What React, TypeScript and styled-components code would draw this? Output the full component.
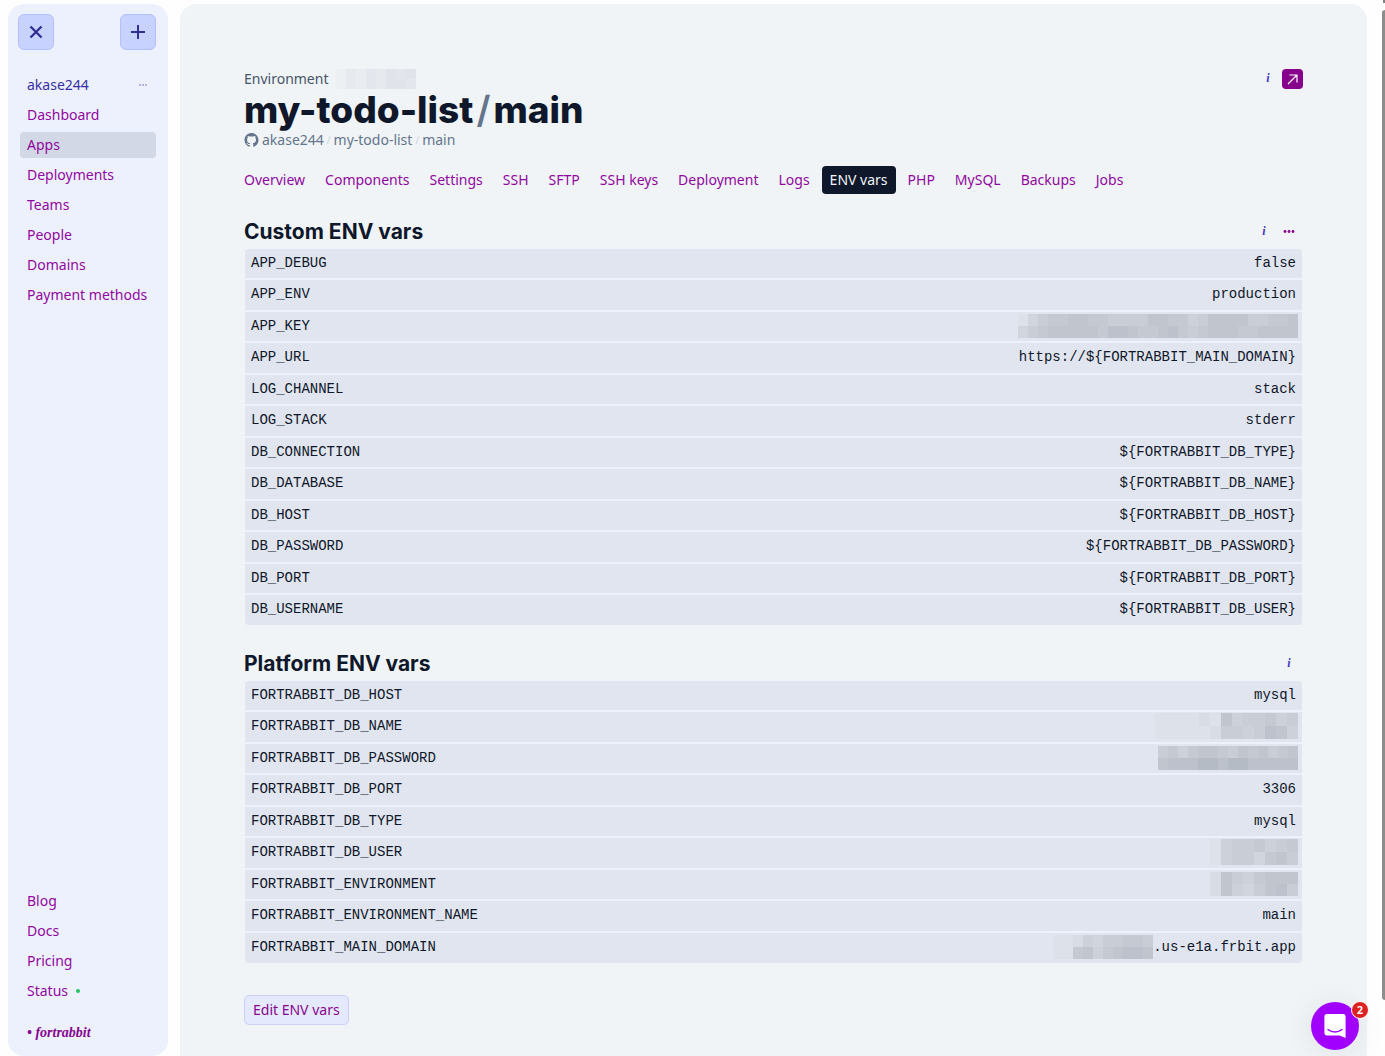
import React from 'react';
import styled, { createGlobalStyle } from 'styled-components';

const colors = {
  ink: '#0f172a',
  slate: '#64748b',
  link: '#9108a0',
  indigo: '#3730a3',
  sidebar: '#edf1fe',
  panel: '#f0f4f7',
  row: '#e1e5ef',
  rowLine: '#eef1fa',
};

const GlobalStyle = createGlobalStyle`
  *, *::before, *::after { box-sizing: border-box; }
  body {
    margin: 0;
    background: #fefefe;
    color: ${colors.ink};
    font: 14px/20px "Noto Sans", sans-serif;
    overflow: hidden;
  }
  button { font: inherit; cursor: pointer; }
  a { text-decoration: none; }
`;

const Shell = styled.div`
  display: flex;
  gap: 12px;
  height: 100vh;
  padding: 4px 18px 0 8px;
`;

const Sidebar = styled.aside`
  display: flex;
  flex-direction: column;
  flex: 0 0 160px;
  padding: 10px 12px 13px 10px;
  border-radius: 16px;
  background: ${colors.sidebar};
`;

const SidebarTop = styled.div`
  display: flex;
  justify-content: space-between;
  margin-bottom: 22px;
`;

const SquareButton = styled.button`
  display: grid;
  place-items: center;
  width: 36px;
  height: 36px;
  padding: 0;
  border: 1px solid #b4bffb;
  border-radius: 6px;
  background: #c7d2fe;
  color: #312e91;
`;

const NavList = styled.nav`
  display: flex;
  flex-direction: column;
  gap: 4px;
  padding-left: 2px;
`;

const NavLink = styled.a<{ $active?: boolean; $user?: boolean }>`
  display: flex;
  align-items: center;
  height: 26px;
  padding: 0 7px;
  border-radius: 4px;
  color: ${(p) => (p.$user ? colors.indigo : colors.link)};
  background: ${(p) => (p.$active ? '#d2d8e5' : 'transparent')};
`;

const UserDots = styled.svg`
  margin-left: auto;
`;

const StatusDot = styled.span`
  width: 4px;
  height: 4px;
  margin-left: 8px;
  border-radius: 50%;
  background: #22c55e;
`;

const Spacer = styled.div`
  flex: 1;
`;

const Brand = styled.a`
  margin-top: 19px;
  padding-left: 9px;
  color: #86068f;
  font: italic bold 14px/20px "Liberation Serif", serif;
`;

const Main = styled.main`
  flex: 1;
  min-width: 0;
  padding: 64px 64px 32px;
  border-radius: 16px 16px 0 0;
  background: ${colors.panel};
`;

const PageHead = styled.header`
  display: flex;
  justify-content: space-between;
  align-items: flex-start;
`;

const Kicker = styled.div`
  display: flex;
  align-items: center;
  gap: 8px;
  height: 22px;
  color: #475569;
`;

const Title = styled.h1`
  margin: 0;
  font: 800 37px/40px Inter, sans-serif;
`;

const TitleSlash = styled.span`
  padding: 0 3px;
  color: ${colors.slate};
  font-weight: 600;
`;

const Crumbs = styled.div`
  display: flex;
  align-items: center;
  gap: 3px;
  color: ${colors.slate};
`;

const CrumbLink = styled.a`
  color: inherit;
`;

const CrumbSlash = styled.span`
  color: #cbd5e1;
  font-size: 10px;
`;

const HeadActions = styled.div`
  display: flex;
  gap: 2px;
  padding-top: 1px;
`;

const OpenLink = styled.a`
  display: grid;
  place-items: center;
  width: 21px;
  height: 20px;
  border-radius: 4px;
  background: #86008c;
  color: #fff;
`;

const IconButton = styled.button`
  display: grid;
  place-items: center;
  width: 24px;
  height: 20px;
  padding: 0;
  border: 0;
  background: none;
  color: ${colors.link};
`;

const InfoButton = styled(IconButton)`
  height: 18px;
  color: #4338ca;
  font: italic bold 12px/18px "Liberation Serif", serif;
`;

const Tabs = styled.nav`
  display: flex;
  flex-wrap: wrap;
  gap: 4px;
  margin: 16px -8px 0;
`;

const Tab = styled.a<{ $active?: boolean }>`
  padding: 4px 8px;
  border-radius: 4px;
  color: ${(p) => (p.$active ? '#f1f5f9' : colors.link)};
  background: ${(p) => (p.$active ? colors.ink : 'transparent')};
`;

const Section = styled.section`
  margin-top: 24px;
  & + & { margin-top: 25px; }
`;

const SectionHead = styled.div`
  display: flex;
  justify-content: space-between;
  height: 31px;
  padding-right: 2px;
`;

const SectionTitle = styled.h2`
  margin: 0;
  font: 700 21px/28px Inter, sans-serif;
`;

const SectionActions = styled.div`
  display: flex;
  align-items: center;
  gap: 1px;
  height: 26px;
`;

const VarTable = styled.table`
  width: calc(100% - 2px);
  margin: 0 1px;
  border-spacing: 0;
  border-radius: 4px;
  overflow: hidden;
  background: ${colors.row};
  font: 14px/20px "Liberation Mono", monospace;
`;

const VarRow = styled.tr`
  height: 31px;
  &:nth-child(even) { height: 32px; }
  & > * { border-bottom: 2px solid ${colors.rowLine}; }
  &:last-child { height: 30px; }
  &:last-child > * { border-bottom: 0; }
`;

const VarName = styled.th`
  padding: 0 6px 2px;
  font-weight: 400;
  text-align: left;
`;

const VarValue = styled.td`
  padding: 0 6px 2px;
  text-align: right;
`;

const ValueLine = styled.div`
  display: flex;
  align-items: center;
  justify-content: flex-end;
`;

const MosaicGrid = styled.span<{ $columns: number; $cell: number; $row: number; $bleed?: boolean }>`
  display: inline-grid;
  grid-template-columns: repeat(${(p) => p.$columns}, ${(p) => p.$cell}px);
  grid-auto-rows: ${(p) => p.$row}px;
  margin-right: ${(p) => (p.$bleed ? '-2px' : '0')};
`;

const MosaicCell = styled.span<{ $fill: string }>`
  background: ${(p) => p.$fill};
`;

const EditButton = styled.button`
  height: 30px;
  margin-top: 32px;
  padding: 0 8px;
  border: 1px solid #cdd0f8;
  border-radius: 5px;
  background: #e5e9fd;
  color: #86068f;
`;

const ScrollThumb = styled.div`
  position: fixed;
  top: 10px;
  right: 0;
  bottom: 56px;
  width: 3px;
  border-radius: 3px 0 0 3px;
  background: #8b8e8b;
`;

const ScrollArrow = styled.div`
  position: fixed;
  top: 0;
  right: 0;
  width: 2px;
  height: 3px;
  background: #7c7f7c;
`;

const ChatButton = styled.button`
  position: fixed;
  right: 26px;
  bottom: 6px;
  display: grid;
  place-items: center;
  width: 48px;
  height: 48px;
  padding: 0;
  border: 0;
  border-radius: 50%;
  background: #a100ff;
  box-shadow: 0 2px 32px rgba(0, 0, 0, 0.08);
`;

const ChatBadge = styled.span`
  position: absolute;
  top: -1px;
  right: -10px;
  width: 18px;
  height: 18px;
  border: 1px solid #fff;
  border-radius: 50%;
  background: #dd2222;
  color: #fff;
  font: 700 11px/16px "Open Sans", sans-serif;
  text-align: center;
`;

/* Shades run from the row background (0) to the darkest block (9). */
const shades = ['transparent', '#dde2ea', '#d8dce4', '#d1d6de', '#ccd1da', '#c8cdd6', '#c4c9d2', '#c0c5ce', '#bcc1cb', '#b5bbc5'];
const paleShades = ['transparent', '#ecf0f3', '#e9ecf0', '#e6e9ed', '#e3e6ec', '#e0e3e9'];

type MosaicProps = { rows: string[]; cell?: number; row?: number; pale?: boolean; bleed?: boolean };

function Mosaic({ rows, cell = 10, row = 12, pale, bleed }: MosaicProps) {
  const palette = pale ? paleShades : shades;
  return (
    <MosaicGrid $columns={rows[0].length} $cell={cell} $row={row} $bleed={bleed} aria-hidden="true">
      {rows.join('').split('').map((level, i) => (
        <MosaicCell key={i} $fill={palette[Number(level)]} />
      ))}
    </MosaicGrid>
  );
}

type Variable = { name: string; value?: string; hidden?: string[]; cell?: number; row?: number };

const customVars: Variable[] = [
  { name: 'APP_DEBUG', value: 'false' },
  { name: 'APP_ENV', value: 'production' },
  { name: 'APP_KEY', hidden: ['1356677665555776645777755667', '3567777768876678656777667777'] },
  { name: 'APP_URL', value: 'https://${FORTRABBIT_MAIN_DOMAIN}' },
  { name: 'LOG_CHANNEL', value: 'stack' },
  { name: 'LOG_STACK', value: 'stderr' },
  { name: 'DB_CONNECTION', value: '${FORTRABBIT_DB_TYPE}' },
  { name: 'DB_DATABASE', value: '${FORTRABBIT_DB_NAME}' },
  { name: 'DB_HOST', value: '${FORTRABBIT_DB_HOST}' },
  { name: 'DB_PASSWORD', value: '${FORTRABBIT_DB_PASSWORD}' },
  { name: 'DB_PORT', value: '${FORTRABBIT_DB_PORT}' },
  { name: 'DB_USERNAME', value: '${FORTRABBIT_DB_USER}' },
];

const platformVars: Variable[] = [
  { name: 'FORTRABBIT_DB_HOST', value: 'mysql' },
  { name: 'FORTRABBIT_DB_NAME', hidden: ['1111217455645', '1111125545874'], cell: 11, row: 13 },
  { name: 'FORTRABBIT_DB_PASSWORD', hidden: ['56467765767567', '78889989988888'] },
  { name: 'FORTRABBIT_DB_PORT', value: '3306' },
  { name: 'FORTRABBIT_DB_TYPE', value: 'mysql' },
  { name: 'FORTRABBIT_DB_USER', hidden: ['14556456', '14553675'], cell: 11, row: 13 },
  { name: 'FORTRABBIT_ENVIRONMENT', hidden: ['27546777', '27435785'], cell: 11 },
  { name: 'FORTRABBIT_ENVIRONMENT_NAME', value: 'main' },
  { name: 'FORTRABBIT_MAIN_DOMAIN', hidden: ['1124355665', '1167467887'], value: '.us-e1a.frbit.app' },
];

function Variables({ items, label }: { items: Variable[]; label: string }) {
  return (
    <VarTable aria-label={label}>
      <tbody>
        {items.map(({ name, value, hidden, cell, row }) => (
          <VarRow key={name}>
            <VarName scope="row">{name}</VarName>
            <VarValue>
              <ValueLine>
                {hidden && <Mosaic rows={hidden} cell={cell} row={row} bleed={!value} />}
                {value}
              </ValueLine>
            </VarValue>
          </VarRow>
        ))}
      </tbody>
    </VarTable>
  );
}

const navItems = ['Dashboard', 'Apps', 'Deployments', 'Teams', 'People', 'Domains', 'Payment methods'];
const footItems = ['Blog', 'Docs', 'Pricing'];
const tabs = ['Overview', 'Components', 'Settings', 'SSH', 'SFTP', 'SSH keys', 'Deployment', 'Logs', 'ENV vars', 'PHP', 'MySQL', 'Backups', 'Jobs'];

export default function App() {
  return (
    <>
      <GlobalStyle />
      <Shell>
        <Sidebar>
          <SidebarTop>
            <SquareButton aria-label="Close menu">
              <svg width="14" height="14" viewBox="0 0 14 14" fill="none" stroke="currentColor" strokeWidth="2.3">
                <path d="M1.5 1.5l11 11M12.5 1.5l-11 11" />
              </svg>
            </SquareButton>
            <SquareButton aria-label="Create">
              <svg width="14" height="14" viewBox="0 0 14 14" fill="none" stroke="currentColor" strokeWidth="2">
                <path d="M7 0v14M0 7h14" />
              </svg>
            </SquareButton>
          </SidebarTop>
          <NavList aria-label="Main">
            <NavLink href="#account" $user>
              akase244
              <UserDots width="12" height="4" viewBox="0 0 12 4" fill="#b3b5dc">
                <path d="M2 1h2v2H2zM5 1h2v2H5zM8 1h2v2H8z" />
              </UserDots>
            </NavLink>
            {navItems.map((item) => (
              <NavLink key={item} href="#nav" $active={item === 'Apps'}>{item}</NavLink>
            ))}
          </NavList>
          <Spacer />
          <NavList aria-label="Resources">
            {footItems.map((item) => (
              <NavLink key={item} href="#resource">{item}</NavLink>
            ))}
            <NavLink href="#status">Status<StatusDot /></NavLink>
          </NavList>
          <Brand href="#home">• fortrabbit</Brand>
        </Sidebar>

        <Main>
          <PageHead>
            <div>
              <Kicker>
                Environment
                <Mosaic pale rows={['13243545', '13243554']} row={10} />
              </Kicker>
              <Title>my-todo-list<TitleSlash>/</TitleSlash>main</Title>
              <Crumbs>
                <svg width="15" height="14" viewBox="0 0 16 16" fill="currentColor" aria-label="GitHub">
                  <path d="M8 0C3.58 0 0 3.58 0 8c0 3.54 2.29 6.53 5.47 7.59.4.07.55-.17.55-.38 0-.19-.01-.82-.01-1.49-2.01.37-2.53-.49-2.69-.94-.09-.23-.48-.94-.82-1.13-.28-.15-.68-.52-.01-.53.63-.01 1.08.58 1.23.82.72 1.21 1.87.87 2.33.66.07-.52.28-.87.51-1.07-1.78-.2-3.64-.89-3.64-3.95 0-.87.31-1.59.82-2.15-.08-.2-.36-1.02.08-2.12 0 0 .67-.21 2.2.82a7.6 7.6 0 0 1 4 0c1.53-1.04 2.2-.82 2.2-.82.44 1.1.16 1.92.08 2.12.51.56.82 1.27.82 2.15 0 3.07-1.87 3.75-3.65 3.95.29.25.54.73.54 1.48 0 1.07-.01 1.93-.01 2.2 0 .21.15.46.55.38A8.01 8.01 0 0 0 16 8c0-4.42-3.58-8-8-8z" />
                </svg>
                <CrumbLink href="#owner">akase244</CrumbLink>
                <CrumbSlash>/</CrumbSlash>
                <CrumbLink href="#repo">my-todo-list</CrumbLink>
                <CrumbSlash>/</CrumbSlash>
                <CrumbLink href="#branch">main</CrumbLink>
              </Crumbs>
            </div>
            <HeadActions>
              <InfoButton aria-label="About this environment">i</InfoButton>
              <OpenLink href="#open" aria-label="Open site">
                <svg width="11" height="11" viewBox="0 0 11 11" fill="none" stroke="currentColor" strokeWidth="1.2">
                  <path d="M1 10L10 1M2.5 1H10v7.5" />
                </svg>
              </OpenLink>
            </HeadActions>
          </PageHead>

          <Tabs aria-label="Environment">
            {tabs.map((tab) => (
              <Tab key={tab} href="#tab" $active={tab === 'ENV vars'}>{tab}</Tab>
            ))}
          </Tabs>

          <Section>
            <SectionHead>
              <SectionTitle>Custom ENV vars</SectionTitle>
              <SectionActions>
                <InfoButton aria-label="About custom ENV vars">i</InfoButton>
                <IconButton aria-label="More">
                  <svg width="12" height="4" viewBox="0 0 12 4" fill="#86008c">
                    <circle cx="2" cy="2.5" r="1.4" />
                    <circle cx="6" cy="2.5" r="1.4" />
                    <circle cx="10" cy="2.5" r="1.4" />
                  </svg>
                </IconButton>
              </SectionActions>
            </SectionHead>
            <Variables items={customVars} label="Custom ENV vars" />
          </Section>

          <Section>
            <SectionHead>
              <SectionTitle>Platform ENV vars</SectionTitle>
              <SectionActions>
                <InfoButton aria-label="About platform ENV vars">i</InfoButton>
              </SectionActions>
            </SectionHead>
            <Variables items={platformVars} label="Platform ENV vars" />
          </Section>

          <EditButton>Edit ENV vars</EditButton>
        </Main>
      </Shell>
      <ScrollArrow />
      <ScrollThumb />
      <ChatButton aria-label="Open chat, 2 unread">
        <svg width="22" height="24" viewBox="0 0 22 24">
          <path d="M3 0h16a2.6 2.6 0 0 1 2.6 2.6V24l-6-2.6H3A2.6 2.6 0 0 1 .4 18.8V2.6A2.6 2.6 0 0 1 3 0z" fill="#fff" />
          <path d="M4 15.5c4 3.3 10 3.3 14 0" fill="none" stroke="#a100ff" strokeWidth="1.5" strokeLinecap="round" />
        </svg>
        <ChatBadge>2</ChatBadge>
      </ChatButton>
    </>
  );
}
